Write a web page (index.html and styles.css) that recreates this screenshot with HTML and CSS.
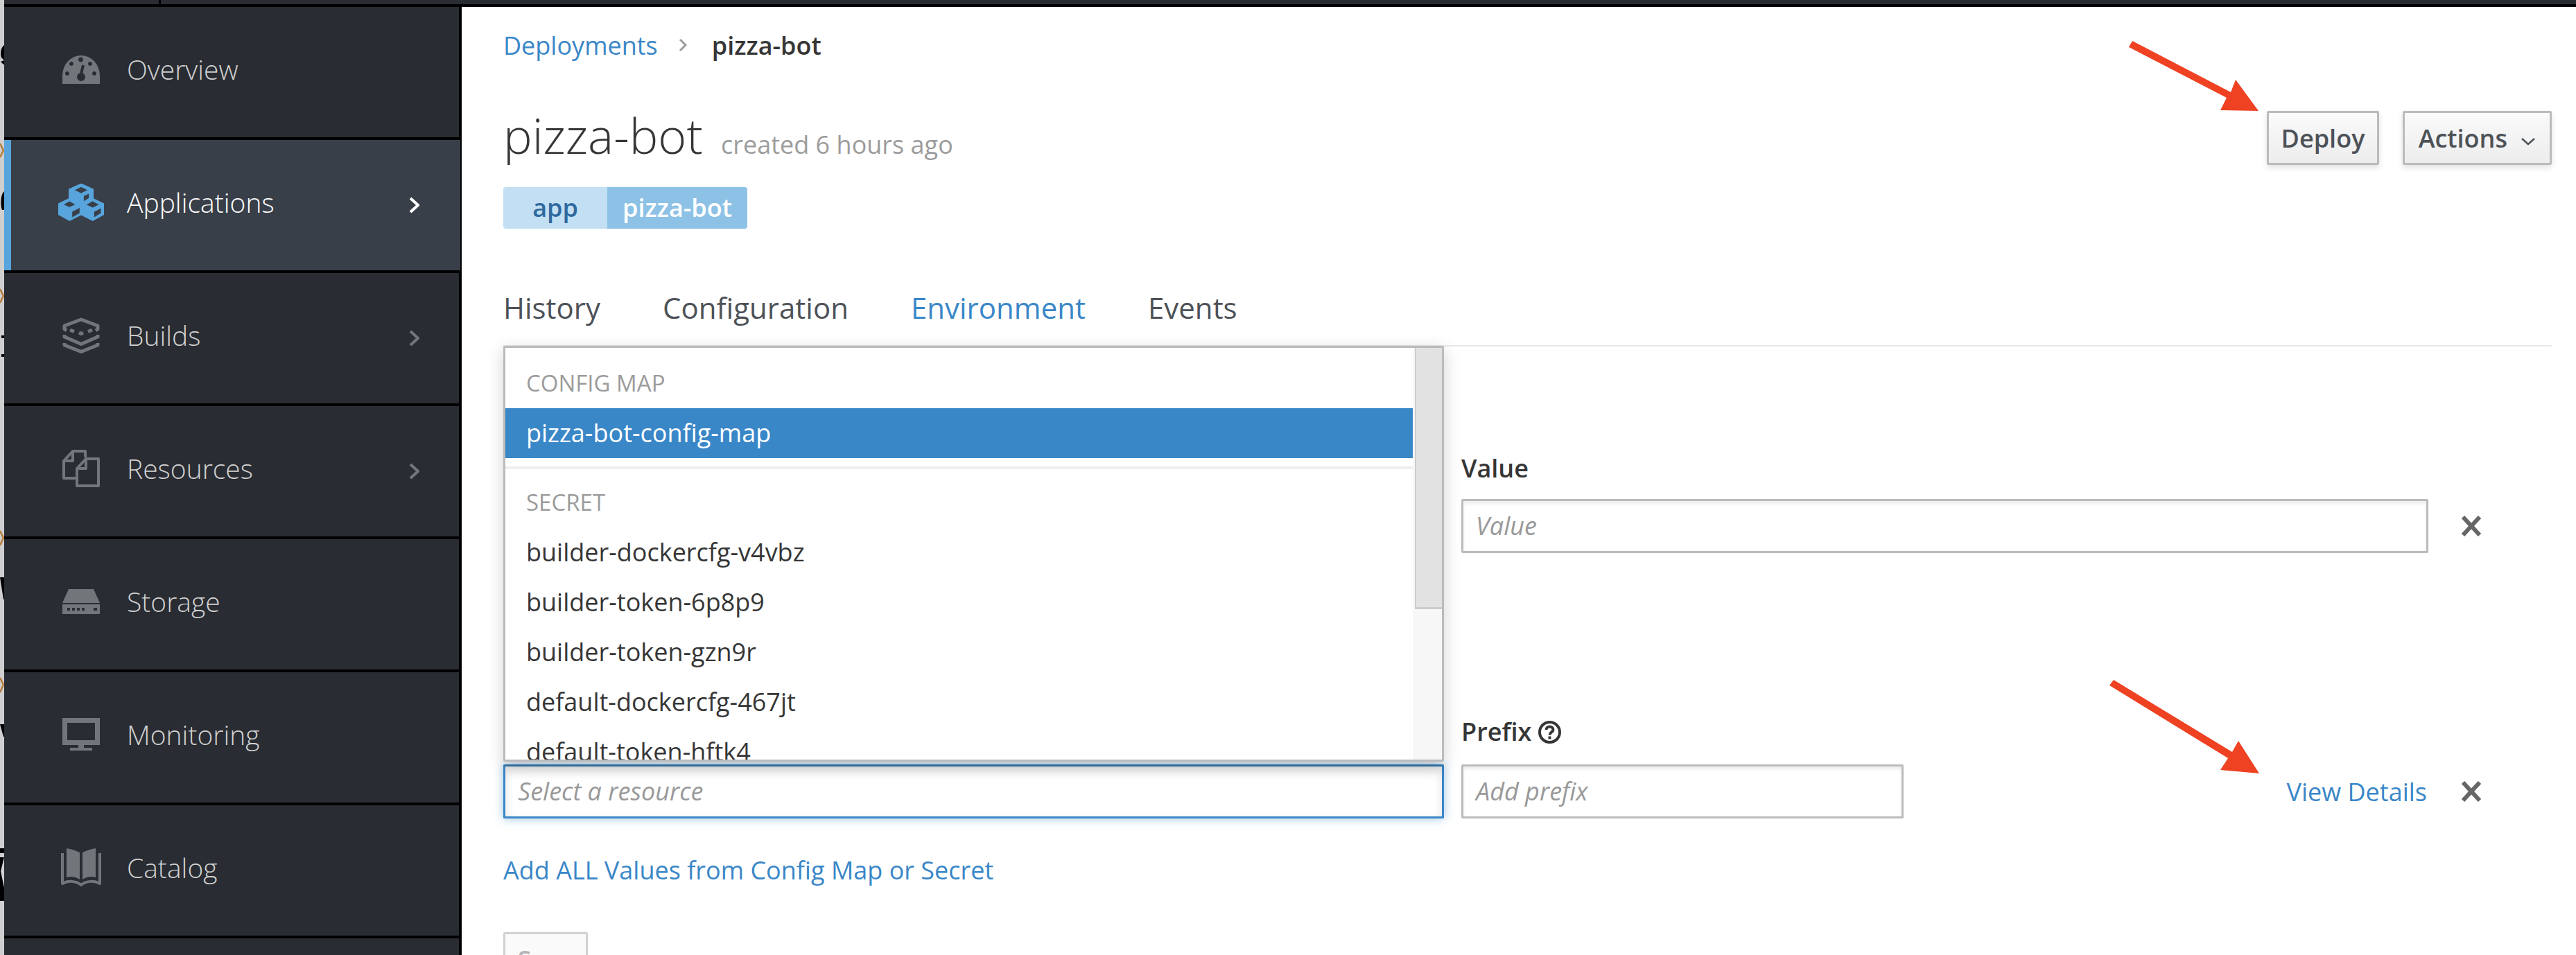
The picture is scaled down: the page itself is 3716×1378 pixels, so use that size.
FILE: index.html
```html
<!DOCTYPE html>
<html>
    <head>
        <meta http-equiv="Content-Type" content="text/html;charset=UTF-8">
        <title>pizza-bot</title>
        <link rel="stylesheet" href="styles.css">
    </head>
    <body>
        <div class="topbar"><span class="topbar-tick"></span></div>
        <div class="shell">

            <!-- window behind the console, only a sliver shows -->
            <svg class="sliver" width="6" height="1368" viewBox="0 10 6 1368">
                <path class="bit-dark" d="M6 70 C1 74 0 82 2 88 L6 92 Z M6 92 L1 94 L5 98 L6 98 Z"/>
                <path class="bit-orange" d="M0 212 L5 222 L0 232" />
                <path class="bit-dark" d="M6 281 C1 285 0 300 3 308 L6 308 Z"/>
                <path class="bit-orange" d="M0 422 L5 432 L0 442" />
                <path class="bit-dark" d="M2 489 H6 V493 H2 Z M2 516 H6 V520 H2 Z"/>
                <path class="bit-orange" d="M0 771 L5 781 L0 792" />
                <path class="bit-dark" d="M0 838 L5 870 L6 870 L6 838 Z"/>
                <path class="bit-orange" d="M0 983 L5 993 L0 1004" />
                <path class="bit-dark" d="M0 1050 L5 1068 L6 1068 L6 1050 Z"/>
                <path class="bit-dark" d="M0 1229 H6 V1236 H0 Z M0 1242 H6 L1 1262 L6 1286 V1305 H0 Z"/>
            </svg>

            <nav class="sidebar">
                <a class="nav-item">
                    <span class="nav-icon">
                        <svg width="54" height="42" viewBox="0 0 54 42">
                            <path class="icon-fill" fill-rule="evenodd" d="M0 42 V30 A27 29 0 0 1 54 30 V42 Z M26.500 3.500 a3.500 3.500 0 1 0 .01 0 Z M13 10 a3 3 0 1 0 .01 0 Z M40 10 a3 3 0 1 0 .01 0 Z M7 24 a3 3 0 1 0 .01 0 Z M46 24 a3 3 0 1 0 .01 0 Z"/>
                            <circle class="icon-cut" cx="27" cy="32" r="6"/>
                            <path class="icon-cut-line" d="M26 32 L30 15"/>
                        </svg>
                    </span>
                    <span class="nav-label">Overview</span>
                </a>
                <a class="nav-item nav-item-active">
                    <span class="nav-icon">
                        <svg width="66" height="54" viewBox="0 0 66 54">
                            <path class="cube-fill" fill-rule="evenodd" d="M33 0 L50.500 8 V21.500 L66 29 V44.500 L49.700 53.500 L33 45 L16.300 53.500 L0 44.500 V29 L15.500 21.500 V8 Z M33 4.300 L23 9.300 L33 14.300 L43 9.300 Z M44.700 13.700 L36.300 17.700 V26 L44.700 21 Z M16.300 25 L7 30.300 L16.300 34.300 L25.300 30.300 Z M31.300 34.300 L19.700 40.300 V49.300 L31.300 42.700 Z M49.700 25 L39.700 30.300 L49.700 35 L59.700 30.300 Z M62 35 L51.300 40.300 V49.300 L62 42.700 Z"/>
                        </svg>
                    </span>
                    <span class="nav-label">Applications</span>
                    <svg class="nav-arrow" width="15" height="24" viewBox="0 0 15 24"><path d="M2 2 L13 12 L2 22"/></svg>
                </a>
                <a class="nav-item">
                    <span class="nav-icon">
                        <svg width="54" height="52" viewBox="0 0 54 52">
                            <path class="icon-line" d="M6 19 L3 17 V12 L27 3 L51 12 V17 L48 19"/>
                            <path class="icon-dash" d="M11 18 L17 20.500 M24 22 L27 23.500 L30 22 M37 20.500 L43 18"/>
                            <path class="icon-line" d="M3 25 V28 L27 38.500 L51 28 V25"/>
                            <path class="icon-line" d="M3 37 V40 L27 49.500 L51 40 V37"/>
                        </svg>
                    </span>
                    <span class="nav-label">Builds</span>
                    <svg class="nav-arrow" width="15" height="24" viewBox="0 0 15 24"><path d="M2 2 L13 12 L2 22"/></svg>
                </a>
                <a class="nav-item">
                    <span class="nav-icon">
                        <svg width="54" height="54" viewBox="0 0 54 54">
                            <path class="icon-thin" d="M33 11 V2 H15 L2 16 V41 H20"/>
                            <path class="icon-thin" d="M15 2 V16 H2"/>
                            <path class="icon-thin" d="M34 13 H52 V52 H21 V27 Z"/>
                            <path class="icon-thin" d="M34 13 V27 H21"/>
                        </svg>
                    </span>
                    <span class="nav-label">Resources</span>
                    <svg class="nav-arrow" width="15" height="24" viewBox="0 0 15 24"><path d="M2 2 L13 12 L2 22"/></svg>
                </a>
                <a class="nav-item">
                    <span class="nav-icon">
                        <svg width="54" height="36" viewBox="0 0 54 36">
                            <path class="icon-fill" d="M9 0 H45 L54 20 H0 Z"/>
                            <path class="icon-fill" fill-rule="evenodd" d="M0 22 H54 V36 H0 Z M7 27 V31 H11 V27 Z M14 27 V31 H18 V27 Z M21 27 V31 H25 V27 Z M28 27 V31 H32 V27 Z M45 27 V31 H50 V27 Z"/>
                        </svg>
                    </span>
                    <span class="nav-label">Storage</span>
                </a>
                <a class="nav-item">
                    <span class="nav-icon">
                        <svg width="54" height="47" viewBox="0 0 54 47">
                            <path class="icon-fill" fill-rule="evenodd" d="M0 0 H54 V39 H31 V43 H43 V47 H11 V43 H23 V39 H0 Z M7 7 V32 H47 V7 Z"/>
                        </svg>
                    </span>
                    <span class="nav-label">Monitoring</span>
                </a>
                <a class="nav-item">
                    <span class="nav-icon">
                        <svg width="58" height="55" viewBox="0 0 58 55">
                            <path class="icon-fill" d="M8 0 C14 1 21 3 27 6 V45 C21 41 14 40 8 42 Z"/>
                            <path class="icon-fill" d="M50 0 C44 1 37 3 31 6 V45 C37 41 44 40 50 42 Z"/>
                            <path class="icon-thin" d="M2 7 V51 C10 46 22 47 29 53 C36 47 48 46 56 51 V7"/>
                        </svg>
                    </span>
                    <span class="nav-label">Catalog</span>
                </a>
                <a class="nav-item"></a>
            </nav>

            <main class="main">
                <div class="breadcrumb">
                    <a class="link">Deployments</a>
                    <svg class="crumb-sep" width="12" height="20" viewBox="0 0 12 20"><path d="M2 2 L10 10 L2 18"/></svg>
                    <strong>pizza-bot</strong>
                </div>

                <div class="page-head">
                    <h1>pizza-bot <small>created 6 hours ago</small></h1>
                    <div class="actions">
                        <button class="btn btn-deploy">Deploy</button>
                        <button class="btn btn-actions">Actions
                            <svg class="caret" width="22" height="12" viewBox="0 0 22 12"><path d="M2 2 L11 10 L20 2"/></svg>
                        </button>
                    </div>
                </div>

                <div class="label-tag">
                    <span class="tag-key">app</span><span class="tag-value">pizza-bot</span>
                </div>

                <div class="tabs">
                    <a class="tab">History</a>
                    <a class="tab">Configuration</a>
                    <a class="tab tab-active">Environment</a>
                    <a class="tab">Events</a>
                </div>

                <div class="env-form">
                    <div class="env-row">
                        <div class="col-name"></div>
                        <div class="col-value">
                            <div class="field-label">Value</div>
                            <div class="input"><em>Value</em></div>
                        </div>
                        <svg class="remove" width="30" height="30" viewBox="0 0 30 30"><path d="M3 2 L27 28 M27 2 L3 28"/></svg>
                    </div>

                    <div class="env-row env-row-from">
                        <div class="col-name">
                            <div class="select-wrap">
                                <div class="dropdown">
                                    <div class="dropdown-list">
                                        <div class="group-title">CONFIG MAP</div>
                                        <div class="option option-selected">pizza-bot-config-map</div>
                                        <div class="divider"></div>
                                        <div class="group-title">SECRET</div>
                                        <div class="option">builder-dockercfg-v4vbz</div>
                                        <div class="option">builder-token-6p8p9</div>
                                        <div class="option">builder-token-gzn9r</div>
                                        <div class="option">default-dockercfg-467jt</div>
                                        <div class="option">default-token-hftk4</div>
                                    </div>
                                    <div class="scrollbar"><div class="scroll-thumb"></div></div>
                                </div>
                                <div class="input input-focus"><em>Select a resource</em></div>
                            </div>
                        </div>
                        <div class="col-value">
                            <div class="field-label field-label-help">Prefix
                                <svg class="help" width="33" height="33" viewBox="0 0 33 33">
                                    <circle cx="16.500" cy="16.500" r="14.500"/>
                                    <path d="M11.500 13 C11.500 7 21.500 7 21.500 13 C21.500 16.500 16.500 16.500 16.500 20.500"/>
                                    <rect x="14.500" y="22.500" width="4" height="4"/>
                                </svg>
                            </div>
                            <div class="prefix-line">
                                <div class="input input-prefix"><em>Add prefix</em></div>
                                <a class="link view-details">View Details</a>
                            </div>
                        </div>
                        <svg class="remove" width="30" height="30" viewBox="0 0 30 30"><path d="M3 2 L27 28 M27 2 L3 28"/></svg>
                    </div>

                    <a class="link add-all">Add ALL Values from Config Map or Secret</a>
                    <button class="btn btn-save">Save</button>
                </div>
            </main>
        </div>

        <!-- red arrows drawn on the screenshot -->
        <svg class="annotations" width="3716" height="1378" viewBox="0 0 3716 1378">
            <polygon points="3076,59 3218,133 3225,115 3258,160 3203,159 3212,141 3071,68"/>
            <polygon points="3049,981 3220,1085 3229,1069 3259,1116 3203,1111 3214,1094 3043,989"/>
        </svg>
    </body>
</html>
```

FILE: styles.css
```css
* {
    box-sizing: border-box;
}
html, body {
    margin: 0;
    height: 1378px;
    overflow: hidden;
}
body {
    position: relative;
    background: #fff;
    color: #363636;
    font-family: "Open Sans", "Liberation Sans", sans-serif;
    font-size: 36px;
}
a {
    display: block;
}
.link {
    color: #3a87c8;
}

/* top edge */
.topbar {
    height: 10px;
    background: #292c32;
    border-bottom: 4px solid #000;
    margin-left: 6px;
    position: relative;
}
.topbar-tick {
    position: absolute;
    left: 223px;
    top: 0;
    width: 3px;
    height: 6px;
    background: #000;
}
.shell {
    display: flex;
    height: 1368px;
    margin-top: 0;
}

/* left edge */
.sliver {
    flex: none;
    display: block;
    background: #cfcfcf;
    margin-top: -10px;
    height: 1378px;
}
.bit-dark {
    fill: #000;
}
.bit-orange {
    fill: none;
    stroke: #b87a35;
    stroke-width: 2.500;
}

/* sidebar */
.sidebar {
    flex: none;
    width: 660px;
    background: #000;
    border-right: 4px solid #000;
}
.nav-item {
    display: flex;
    align-items: center;
    height: 188px;
    margin-bottom: 4px;
    padding: 0 57px 9px 76px;
    background: #292c32;
    color: #d1d1d1;
    font-weight: 300;
    font-size: 39px;
}
.nav-item-active {
    background: #393f49;
    color: #fff;
    border-left: 10px solid #57a5dc;
    padding-left: 66px;
    margin-right: -2px;
    padding-right: 59px;
}
.nav-icon {
    flex: none;
    display: flex;
    justify-content: center;
    width: 70px;
    margin-right: 31px;
}
.nav-arrow {
    margin-left: auto;
    margin-top: 9px;
    fill: none;
    stroke: #72767b;
    stroke-width: 4;
}
.nav-item-active .nav-arrow {
    stroke: #fff;
}
.icon-fill {
    fill: #72767b;
}
.icon-cut {
    fill: #292c32;
}
.icon-cut-line {
    stroke: #292c32;
    stroke-width: 4;
}
.cube-fill {
    fill: #57a5dc;
    stroke: #57a5dc;
    stroke-width: 1;
    stroke-linejoin: round;
}
.icon-line {
    fill: none;
    stroke: #72767b;
    stroke-width: 5;
    stroke-linejoin: round;
}
.icon-dash {
    fill: none;
    stroke: #72767b;
    stroke-width: 5;
}
.icon-thin {
    fill: none;
    stroke: #72767b;
    stroke-width: 4;
    stroke-linejoin: round;
}

/* main */
.main {
    flex: 1;
    min-width: 0;
    padding: 0 35px 0 60px;
    position: relative;
}
.breadcrumb {
    display: flex;
    align-items: center;
    height: 60px;
    margin-top: 25px;
}
.breadcrumb strong {
    font-weight: 600;
}
.crumb-sep {
    margin: 0 36px 0 30px;
    fill: none;
    stroke: #9c9c9c;
    stroke-width: 3;
}
.page-head {
    display: flex;
    justify-content: space-between;
    height: 78px;
    margin-top: 65px;
}
h1 {
    margin: -4px 0 0;
    font-weight: 300;
    font-size: 70px;
    line-height: 78px;
    color: #363636;
}
h1 small {
    margin-left: 8px;
    font-size: 36px;
    font-weight: 400;
    color: #9c9c9c;
}
.actions {
    display: flex;
    gap: 34px;
}
.btn {
    height: 78px;
    padding: 0;
    border: 3px solid #bbb;
    border-radius: 2px;
    background: linear-gradient(#fafafa, #ededed);
    box-shadow: 0 4px 8px rgba(3, 3, 3, .12);
    color: #4d5258;
    font-family: inherit;
    font-size: 36px;
    font-weight: 600;
}
.btn-deploy {
    width: 162px;
}
.btn-actions {
    width: 215px;
}
.caret {
    margin-left: 10px;
    vertical-align: 3px;
    fill: none;
    stroke: #4d5258;
    stroke-width: 2.500;
}
.label-tag {
    display: flex;
    width: 352px;
    height: 60px;
    margin-top: 32px;
    border-radius: 4px;
    overflow: hidden;
    line-height: 60px;
    font-weight: 600;
    text-align: center;
}
.tag-key {
    width: 150px;
    background: #c3dff3;
    color: #2e6a9e;
}
.tag-value {
    flex: 1;
    background: #8dc2e6;
    color: #fff;
}
.tabs {
    display: flex;
    gap: 90px;
    height: 85px;
    margin-top: 85px;
    border-bottom: 2px solid #e8e8e8;
    font-size: 42px;
    color: #4d5258;
}
.tab-active {
    color: #3a87c8;
}

/* form */
.env-form {
    padding-top: 152px;
}
.env-row {
    display: flex;
    align-items: flex-end;
    gap: 25px;
}
.env-row-from {
    margin-top: 234px;
}
.col-name {
    flex: none;
    width: 1357px;
}
.col-value {
    flex: none;
    width: 1395px;
}
.field-label {
    height: 48px;
    margin-bottom: 20px;
    line-height: 48px;
    font-weight: 600;
}
.field-label-help {
    display: flex;
    align-items: center;
    gap: 10px;
    margin-bottom: 23px;
}
.help {
    fill: #363636;
}
.help circle, .help path {
    fill: none;
    stroke: #363636;
    stroke-width: 4;
}
.input {
    height: 78px;
    padding: 0 18px;
    border: 3px solid #bbb;
    border-radius: 2px;
    background: #fff;
    box-shadow: inset 0 4px 4px rgba(3, 3, 3, .07);
    line-height: 72px;
    color: #999;
}
.input em {
    font-style: italic;
}
.input-focus {
    border-color: #3a87c8;
    border-top-color: #3377ad;
    box-shadow: inset 0 6px 14px rgba(3, 3, 3, .12), 0 0 14px rgba(58, 135, 200, .5);
}
.remove {
    flex: none;
    margin: 0 0 24px 22px;
    fill: none;
    stroke: #666;
    stroke-width: 6;
}
.prefix-line {
    display: flex;
    align-items: center;
    justify-content: space-between;
}
.input-prefix {
    width: 638px;
}
.view-details {
    margin-right: 2px;
}

/* dropdown over the select */
.select-wrap {
    position: relative;
}
.dropdown {
    position: absolute;
    left: 0;
    right: 0;
    bottom: calc(100% + 4px);
    height: 600px;
    display: flex;
    background: #fff;
    border: 3px solid #bbb;
    border-radius: 2px;
    box-shadow: 0 6px 24px rgba(3, 3, 3, .18);
    overflow: hidden;
}
.dropdown-list {
    flex: 1;
    min-width: 0;
    padding-top: 15px;
}
.group-title {
    height: 72px;
    padding-left: 30px;
    line-height: 72px;
    font-size: 33px;
    color: #9c9c9c;
}
.option {
    height: 72px;
    padding-left: 30px;
    line-height: 72px;
    color: #363636;
}
.option-selected {
    background: #3a87c8;
    color: #fff;
}
.divider {
    height: 4px;
    margin: 12px 0;
    background: #eee;
}
.scrollbar {
    flex: none;
    width: 42px;
    background: #f7f7f7;
}
.scroll-thumb {
    height: 377px;
    margin-left: 3px;
    background: #e2e2e2;
    border-left: 2px solid #ccc;
    border-bottom: 3px solid #ccc;
}
.add-all {
    margin-top: 51px;
    line-height: 48px;
}
.btn-save {
    display: block;
    width: 122px;
    margin-top: 65px;
    border-color: #d1d1d1;
    background: #fafafa;
    box-shadow: none;
    color: #b5b5b5;
}

/* annotations */
.annotations {
    position: absolute;
    left: 0;
    top: 0;
    fill: #ee4223;
    pointer-events: none;
}
```
